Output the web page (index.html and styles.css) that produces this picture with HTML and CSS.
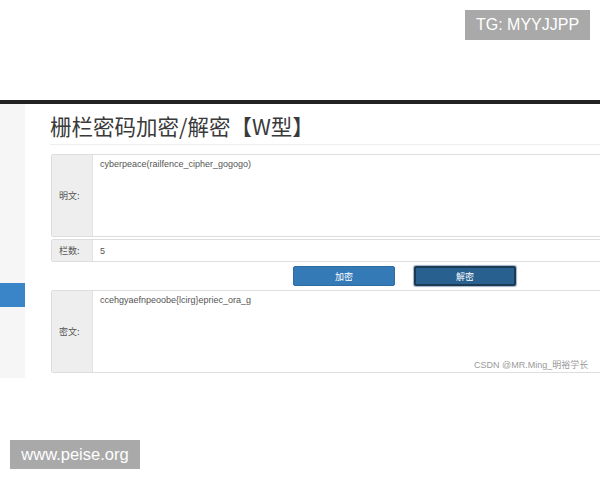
FILE: index.html
```html
<!DOCTYPE html>
<html lang="zh">
<head>
<meta charset="utf-8">
<title>栅栏密码加密/解密【W型】</title>
<link rel="stylesheet" href="styles.css">
</head>
<body>
<div class="top">
  <span class="badge tg">TG: MYYJJPP</span>
</div>
<div class="bar"></div>
<div class="main">
  <div class="side"><div class="side-active"></div></div>
  <div class="content">
    <h1 class="title">栅栏密码加密/解密【W型】</h1>
    <div class="group tall">
      <div class="label">明文:</div>
      <div class="field">cyberpeace(railfence_cipher_gogogo)</div>
    </div>
    <div class="group short">
      <div class="label">栏数:</div>
      <div class="field">5</div>
    </div>
    <div class="actions">
      <button class="btn">加密</button>
      <button class="btn active">解密</button>
    </div>
    <div class="group tall out">
      <div class="label">密文:</div>
      <div class="field">ccehgyaefnpeoobe{lcirg}epriec_ora_g</div>
      <span class="mark">CSDN @MR.Ming_明裕学长</span>
    </div>
  </div>
</div>
<div class="bottom">
  <span class="badge www">www.peise.org</span>
</div>
</body>
</html>
```
FILE: styles.css
```css
html, body {
  margin: 0;
  padding: 0;
  background: #fff;
  overflow: hidden;
  width: 600px;
  height: 480px;
  font-family: "Liberation Sans", "Noto Sans CJK SC", sans-serif;
  color: #333;
}
.top {
  height: 100px;
  box-sizing: border-box;
  padding: 10px 10px 0 0;
  display: flex;
  justify-content: flex-end;
  align-items: flex-start;
}
.badge {
  display: inline-block;
  background: #a9a9a9;
  color: #fff;
  font-size: 16px;
  line-height: 30px;
  height: 30px;
  text-align: center;
}
.tg {
  width: 125px;
}
.www {
  width: 130px;
  height: 29px;
  line-height: 29px;
  font-size: 16.5px;
}
.bar {
  height: 4px;
  background: #222;
}
.main {
  display: flex;
  align-items: flex-start;
}
.side {
  width: 25px;
  height: 274px;
  background: #f6f6f6;
  flex: none;
  padding-top: 179px;
  box-sizing: border-box;
}
.side-active {
  height: 24px;
  background: #3a85c7;
}
.content {
  margin-left: 25px;
  width: 560px;
  flex: none;
}
.title {
  margin: 0;
  padding-top: 8px;
  padding-bottom: 4px;
  font-size: 21.5px;
  line-height: 28px;
  font-weight: normal;
  color: #3a3a3a;
  font-family: "Noto Sans CJK SC", "Liberation Sans", sans-serif;
  border-bottom: 1px solid #eee;
}
.group {
  display: flex;
  margin-left: 1px;
  border: 1px solid #ddd;
  border-radius: 2px;
  box-sizing: border-box;
  position: relative;
  font-size: 9px;
}
.tall {
  height: 83px;
  margin-top: 9px;
}
.short {
  height: 23px;
  margin-top: 2px;
}
.out {
  margin-top: 4px;
}
.label {
  width: 41px;
  flex: none;
  background: #eee;
  border-right: 1px solid #e3e3e3;
  box-sizing: border-box;
  display: flex;
  align-items: center;
  padding-left: 7px;
  color: #555;
  font-size: 9px;
  font-family: "Noto Sans CJK SC", sans-serif;
}
.field {
  flex: 1;
  padding: 3px 7px;
  color: #555;
  font-size: 9px;
  line-height: 12px;
}
.short .field {
  display: flex;
  align-items: center;
  padding-top: 0;
  padding-bottom: 0;
}
.actions {
  display: flex;
  gap: 19px;
  margin-top: 4px;
  padding-left: 243px;
}
.btn {
  width: 102px;
  height: 20px;
  border: 1px solid #2e6da4;
  border-radius: 2px;
  background: #337ab7;
  color: #fff;
  font-size: 9px;
  font-family: "Noto Sans CJK SC", sans-serif;
  padding: 0;
}
.btn.active {
  background: #286090;
  border: 2px solid #1d3a52;
  box-shadow: 0 0 1px 1px #9fb3c6;
}
.mark {
  position: absolute;
  left: 422px;
  bottom: 1px;
  font-size: 9px;
  color: #9a9a9a;
  font-family: "Liberation Sans", "Noto Sans CJK SC", sans-serif;
  white-space: nowrap;
}
.bottom {
  margin-top: 62px;
  padding-left: 10px;
}
```
